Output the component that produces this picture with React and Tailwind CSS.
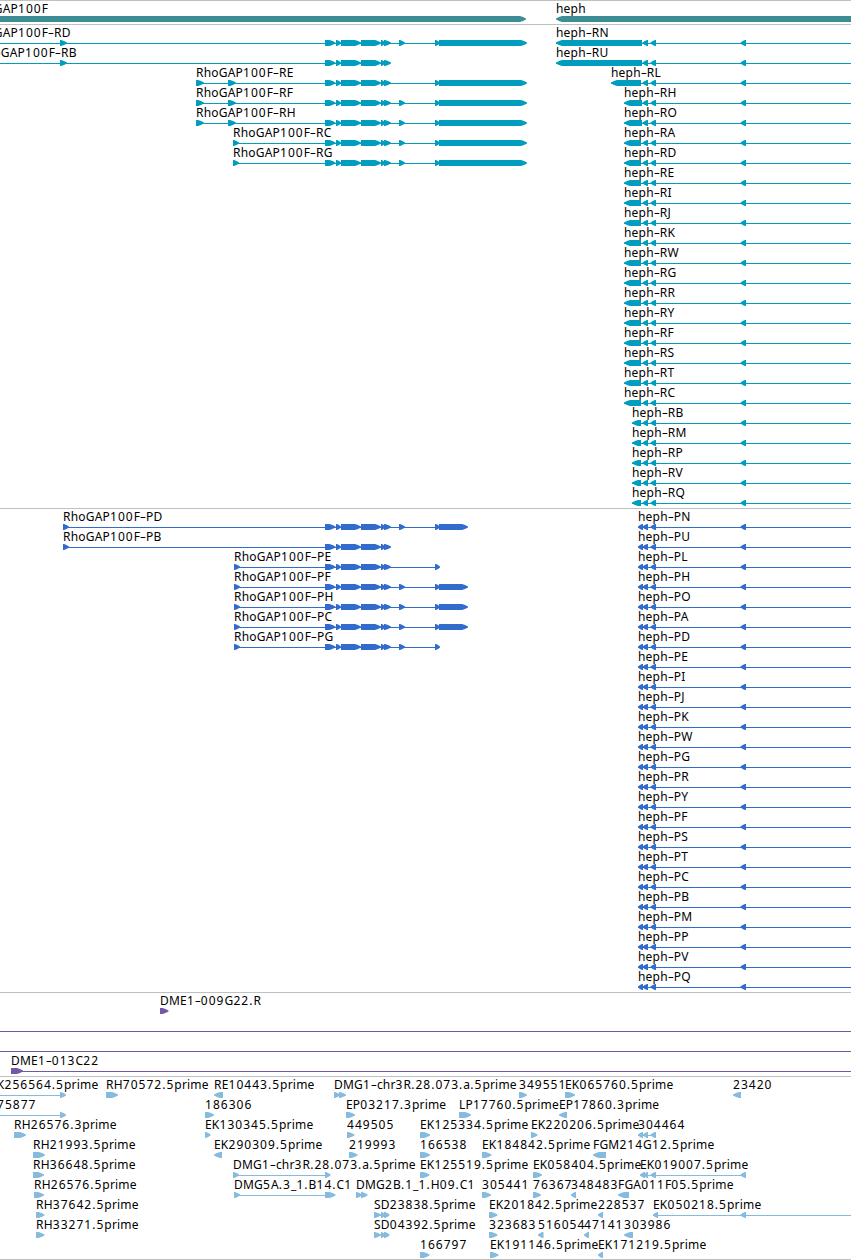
import React from 'react'

const WIDTH = 851;

// blocks: [start, end] pairs. The name is drawn above the start of the feature.
const forwardExons = [[325, 335.5], [336, 341], [341, 361], [361, 381], [381, 385], [384, 391]];
const reverseExons = [[642.5, 648], [650.5, 656], [740.5, 746]];

const gap = (name, start, blocks) => [{ name, start, blocks }];

const heph = (name, start, end) => ({
    name,
    start,
    stop: WIDTH,
    left: true,
    blocks: [[start, end], ...reverseExons],
});

const geneRows = [
    [
        { name: 'RhoGAP100F', start: -29, blocks: [[-29, 526]] },
        { name: 'heph', start: 556, left: true, blocks: [[556, 900]] },
    ],
];

const longEnd = [[399, 405], [435, 440], [439, 527]];

const rhoTranscripts = [
    gap('RhoGAP100F-RD', -29, [[60, 67], ...forwardExons, ...longEnd]),
    gap('RhoGAP100F-RB', -22, [[60, 67], ...forwardExons]),
    gap('RhoGAP100F-RE', 196, [[196, 204], [228, 236], ...forwardExons, [435, 440], [439, 527]]),
    gap('RhoGAP100F-RF', 196, [[196, 204], [228, 236], ...forwardExons, ...longEnd]),
    gap('RhoGAP100F-RH', 196, [[196, 204], [228, 236], ...forwardExons, ...longEnd]),
    gap('RhoGAP100F-RC', 233, [[233, 239], ...forwardExons, ...longEnd]),
    gap('RhoGAP100F-RG', 233, [[233, 239], ...forwardExons, ...longEnd]),
];

const hephTranscripts = [
    ['RN', 556, 642], ['RU', 556, 642], ['RL', 611, 641], ['RH', 624, 642], ['RO', 624, 642],
    ['RA', 624, 641], ['RD', 624, 641], ['RE', 624, 641], ['RI', 624, 641], ['RJ', 624, 641],
    ['RK', 624, 641], ['RW', 624, 641], ['RG', 624, 641], ['RR', 624, 641], ['RY', 624, 641],
    ['RF', 624, 641], ['RS', 624, 641], ['RT', 624, 641], ['RC', 624, 641], ['RB', 632, 641],
    ['RM', 632, 641], ['RP', 632, 641], ['RV', 632, 641], ['RQ', 632, 641],
];

const transcriptRows = hephTranscripts.map(([id, start, end], i) => [
    ...(rhoTranscripts[i] || []),
    heph(`heph-${id}`, start, end),
]);

const proteinEnd = [[399, 405], [435, 440], [439, 468]];

const rhoProteins = [
    gap('RhoGAP100F-PD', 63, [[63, 69], ...forwardExons, ...proteinEnd]),
    gap('RhoGAP100F-PB', 63, [[63, 69], ...forwardExons]),
    gap('RhoGAP100F-PE', 234, [[234, 240], ...forwardExons, [435, 440]]),
    gap('RhoGAP100F-PF', 234, [[234, 240], ...forwardExons, ...proteinEnd]),
    gap('RhoGAP100F-PH', 234, [[234, 240], ...forwardExons, ...proteinEnd]),
    gap('RhoGAP100F-PC', 234, [[234, 240], ...forwardExons, ...proteinEnd]),
    gap('RhoGAP100F-PG', 234, [[234, 240], ...forwardExons, [399, 405], [435, 440]]),
];

const hephProteins = [
    'PN', 'PU', 'PL', 'PH', 'PO', 'PA', 'PD', 'PE', 'PI', 'PJ', 'PK', 'PW',
    'PG', 'PR', 'PY', 'PF', 'PS', 'PT', 'PC', 'PB', 'PM', 'PP', 'PV', 'PQ',
];

const proteinRows = hephProteins.map((id, i) => [
    ...(rhoProteins[i] || []),
    heph(`heph-${id}`, 638, 643),
]);

const cloneRows = [
    [{ name: 'DME1-009G22.R', start: 160, blocks: [[160, 168.5]] }],
    [{ name: '', start: 0, stop: WIDTH, blocks: [] }],
    [{ name: '', start: 0, stop: WIDTH, blocks: [] }],
    [{ name: 'DME1-013C22', start: 11, stop: WIDTH, blocks: [[11, 23]] }],
];

const fwd = (name, ...blocks) => ({ name, start: blocks[0][0], blocks });
const rev = (name, ...blocks) => ({ name, start: blocks[0][0], left: true, blocks });

const insertionRows = [
    [
        { name: 'EK256564.5prime', start: -10, blocks: [[60, 66]] },
        fwd('RH70572.5prime', [106, 118]),
        rev('RE10443.5prime', [214, 223]),
        fwd('DMG1-chr3R.28.073.a.5prime', [334, 340], [339, 346]),
        fwd('349551', [519, 527]),
        fwd('EK065760.5prime', [565, 575]),
        rev('23420', [733, 741]),
    ],
    [
        { name: '75877', start: -3, blocks: [[60, 66]] },
        fwd('186306', [205, 214]),
        fwd('EP03217.3prime', [346, 355]),
        fwd('LP17760.5prime', [459, 471]),
        rev('EP17860.3prime', [559, 567]),
    ],
    [
        fwd('RH26576.3prime', [14, 26]),
        fwd('EK130345.5prime', [205, 210.5]),
        fwd('449505', [347, 354.5]),
        fwd('EK125334.5prime', [420, 430]),
        fwd('EK220206.5prime', [531, 537.5]),
        rev('304464', [638, 643], [643, 648], [650.5, 656]),
    ],
    [
        fwd('RH21993.5prime', [33, 45]),
        rev('EK290309.5prime', [214, 222]),
        fwd('219993', [349, 357.5]),
        fwd('166538', [420, 430]),
        fwd('EK184842.5prime', [482, 491.5]),
        rev('FGM214G12.5prime', [593, 606]),
    ],
    [
        fwd('RH36648.5prime', [33, 44]),
        fwd('DMG1-chr3R.28.073.a.5prime', [233, 239], [325, 330.5]),
        fwd('EK125519.5prime', [420, 429.5]),
        fwd('EK058404.5prime', [533, 542]),
        rev('EK019007.5prime', [640, 645], [644, 648], [650.5, 656], [740.5, 746]),
    ],
    [
        fwd('RH26576.5prime', [34, 44]),
        fwd('DMG5A.3_1.B14.C1', [234, 240], [325, 335.5]),
        fwd('DMG2B.1_1.H09.C1', [356, 362], [361, 367.5]),
        fwd('305441', [482, 491]),
        fwd('76367', [533, 541]),
        rev('348483', [571, 576]),
        rev('FGA011F05.5prime', [618, 629]),
    ],
    [
        fwd('RH37642.5prime', [36, 44.5]),
        fwd('SD23838.5prime', [374, 381], [381, 385], [384, 389.5]),
        fwd('EK201842.5prime', [489, 497.5]),
        rev('228537', [598, 603]),
        { name: 'EK050218.5prime', start: 653, stop: WIDTH, left: true, blocks: [[653, 658], [740.5, 746]] },
    ],
    [
        fwd('RH33271.5prime', [36, 44.5]),
        fwd('SD04392.5prime', [374, 381], [381, 385], [384, 389.5]),
        fwd('323683', [489, 497.5]),
        rev('516054', [538, 543.5]),
        rev('47141', [584, 589]),
        rev('303986', [624, 633]),
    ],
    [
        fwd('166797', [420, 429.5]),
        fwd('EK191146.5prime', [490, 498.5]),
        rev('EK171219.5prime', [598, 603]),
    ],
];

const arrow = ([a, b], left) => {
    const tip = Math.min(b - a - 1, 6);
    const mid = tip / 2;
    return left
        ? `${b},0 ${a + tip},0 ${a + mid},1 ${a},2.5 ${a},3.5 ${a + mid},5 ${a + tip},6 ${b},6`
        : `${a},0 ${b - tip},0 ${b - mid},1 ${b},2.5 ${b},3.5 ${b - mid},5 ${b - tip},6 ${a},6`;
}

const Feature = ({ start, stop, left, blocks }) => {
    const end = stop || blocks[blocks.length - 1][1];
    const showLine = stop || blocks.length > 1 || blocks[0][0] !== start;
    return (
        <g>
            {showLine && <rect x={start} y="3" width={end - start - (stop ? 0 : 1)} height="1" shapeRendering="crispEdges" />}
            {blocks.map((block, i) => (
                <polygon key={i} points={arrow(block, left)} />
            ))}
        </g>
    )
}

// digits are set wider than letters, and the hyphen is stretched to a dash
const Label = ({ name }) => {
    return name.split(/([\d.]+|-)/).map((part, i) => {
        if (part === '-') {
            return <span key={i} className="inline-block w-[6px] text-center scale-x-[1.6]">-</span>
        }
        if (/\d|\./.test(part)) {
            return <span key={i} className="tracking-[1.02px]">{part}</span>
        }
        return part;
    })
}

const Row = ({ features }) => {
    return (
        <div className="relative h-5 pt-[14px]">
            {features.map((feature, i) => (
                <span
                    key={i}
                    className="absolute top-0 text-[12px] leading-[13px] tracking-[0.2px] text-black whitespace-nowrap"
                    style={{ left: feature.start }}
                >
                    <Label name={feature.name} />
                </span>
            ))}
            <svg width={WIDTH} height="6" className="relative block fill-current">
                {features.map((feature, i) => (
                    <Feature key={i} {...feature} />
                ))}
            </svg>
        </div>
    )
}

const Track = ({ rows, className }) => {
    return (
        <section className={`border-t border-t-[#c0c0c0] border-b-[#c0c0c0] pt-px ${className}`}>
            {rows.map((features, i) => (
                <Row key={i} features={features} />
            ))}
        </section>
    )
}

const App = () => {
    return (
        <main className="flex flex-col w-[851px] h-[1260px] overflow-hidden bg-white font-['Noto_Sans','DejaVu_Sans',sans-serif]">
            <Track rows={geneRows} className="pb-[2px] text-[#3d8d94]" />
            <Track rows={transcriptRows} className="pb-[2px] text-[#009dbf]" />
            <Track rows={proteinRows} className="pb-[2px] text-[#316ccd]" />
            <Track rows={cloneRows} className="pb-[2px] text-[#7358a8]" />
            <Track rows={insertionRows} className="pb-px border-b text-[#86bbde]" />
        </main>
    )
}

export default App
